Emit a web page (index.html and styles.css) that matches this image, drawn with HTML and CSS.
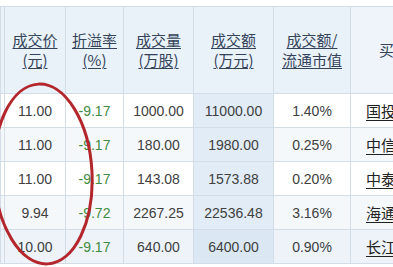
FILE: index.html
```html
<!DOCTYPE html>
<html lang="zh-CN">
<head>
<meta charset="utf-8">
<link rel="stylesheet" href="styles.css">
</head>
<body>
<div class="page">
  <table class="grid">
    <colgroup>
      <col class="c0"><col class="c1"><col class="c2"><col class="c3"><col class="c4"><col class="c5"><col class="c6">
    </colgroup>
    <thead>
      <tr>
        <th></th>
        <th><a>成交价<br>(元)</a></th>
        <th><a>折溢率<br>(%)</a></th>
        <th><a>成交量<br>(万股)</a></th>
        <th><a>成交额<br>(万元)</a></th>
        <th><a>成交额/<br>流通市值</a></th>
        <th class="buyer">买方营业部</th>
      </tr>
    </thead>
    <tbody>
      <tr class="odd">
        <td></td><td>11.00</td><td class="neg">-9.17</td><td>1000.00</td><td class="amt">11000.00</td><td>1.40%</td><td class="name"><a>国投证券股份有限公司</a></td>
      </tr>
      <tr class="even">
        <td></td><td>11.00</td><td class="neg">-9.17</td><td>180.00</td><td class="amt">1980.00</td><td>0.25%</td><td class="name"><a>中信证券股份有限公司</a></td>
      </tr>
      <tr class="odd">
        <td></td><td>11.00</td><td class="neg">-9.17</td><td>143.08</td><td class="amt">1573.88</td><td>0.20%</td><td class="name"><a>中泰证券股份有限公司</a></td>
      </tr>
      <tr class="even">
        <td></td><td>9.94</td><td class="neg">-9.72</td><td>2267.25</td><td class="amt">22536.48</td><td>3.16%</td><td class="name"><a>海通证券股份有限公司</a></td>
      </tr>
      <tr class="blue">
        <td></td><td>10.00</td><td class="neg">-9.17</td><td>640.00</td><td class="amt">6400.00</td><td>0.90%</td><td class="name"><a>长江证券股份有限公司</a></td>
      </tr>
    </tbody>
  </table>
  <svg class="circle" width="160" height="267" viewBox="0 0 160 267" aria-hidden="true">
    <ellipse cx="43" cy="174" rx="49" ry="90" transform="rotate(-3 43 174)" fill="none" stroke="#b3262b" stroke-width="3"/>
  </svg>
</div>
</body>
</html>
```

FILE: styles.css
```css
html, body {
  margin: 0;
  padding: 0;
  background: #ffffff;
  overflow: hidden;
}

.page {
  position: relative;
  width: 393px;
  height: 267px;
  overflow: hidden;
  padding-top: 6px;
  box-sizing: border-box;
}

.grid {
  border-collapse: collapse;
  table-layout: fixed;
  width: 470px;
  font-family: "Liberation Sans", Arial, "Noto Sans CJK SC", sans-serif;
  font-size: 14px;
  color: #404040;
}

.c0 { width: 4px; }
.c1 { width: 61px; }
.c2 { width: 58px; }
.c3 { width: 70px; }
.c4 { width: 80px; }
.c5 { width: 77px; }
.c6 { width: 120px; }

.grid th,
.grid td {
  border: 1px solid #d3dde8;
  padding: 0;
  text-align: center;
  white-space: nowrap;
  overflow: hidden;
}

.grid th {
  height: 86px;
  background: #e9f1f9;
  font-family: "Noto Sans CJK SC", "Liberation Sans", sans-serif;
  font-weight: normal;
  font-size: 15px;
  line-height: 20px;
  color: #34435a;
}

.grid th a {
  text-decoration: underline;
  text-underline-offset: 2px;
  text-decoration-thickness: 1px;
}

.grid th.buyer {
  text-align: left;
  padding-left: 28px;
  background: #eef4fa;
}

.grid td {
  height: 33px;
}

.odd td { background: #ffffff; }
.even td { background: #f5f8fb; }
.blue td { background: #edf3f9; }

.grid td.amt { background: #e1ecf6; }
.blue td.amt { background: #dbe8f4; }

.grid td.neg { color: #3f8b3f; }

.grid td.name {
  text-align: left;
  padding-left: 15px;
  font-family: "Noto Sans CJK SC", sans-serif;
  font-size: 15px;
  color: #222;
}

.grid td.name a {
  text-decoration: underline;
  text-underline-offset: 3px;
}

.circle {
  position: absolute;
  left: 0;
  top: 0;
  pointer-events: none;
}
```
